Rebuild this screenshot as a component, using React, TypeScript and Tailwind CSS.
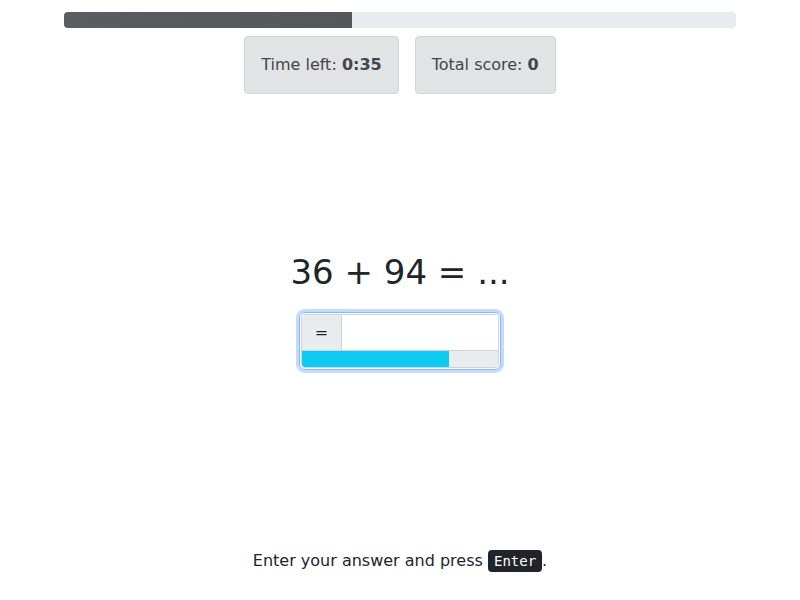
import React from 'react';

const font = { fontFamily: '"DejaVu Sans", sans-serif' };

function StatBox({ label, value }: { label: string; value: string }) {
    return (
        <div className="px-4 py-4 bg-[#e2e3e5] border border-[#d3d6d8] rounded text-[#41464b] text-base leading-6">
            {label} <strong className="font-bold">{value}</strong>
        </div>
    );
}

export default function App() {
    const timeProgress = 42.86;
    const answerProgress = 75;

    return (
        <div className="w-[800px] h-[600px] bg-white text-[#212529] flex flex-col items-center" style={font}>
            <div className="w-[672px] h-4 mt-3 bg-[#e9ecef] rounded overflow-hidden flex">
                <div className="h-full bg-gradient-to-r from-[#5a5d62] to-[#53565b]" style={{ width: `${timeProgress}%` }} />
            </div>

            <div className="flex gap-4 mt-2">
                <StatBox label="Time left:" value="0:35" />
                <StatBox label="Total score:" value="0" />
            </div>

            <h1 className="mt-[158px] text-[34px] leading-[1.2] font-normal">36 + 94 = ...</h1>

            <div className="mt-[19px] w-[202px] rounded-md border border-[#86b7fe] shadow-[0_0_0_3px_rgba(13,110,253,0.25)] overflow-hidden p-px">
                <div className="rounded overflow-hidden border border-[#ced4da]">
                    <div className="flex h-[36px] border-b border-[#ced4da]">
                        <div className="w-10 bg-[#e9ecef] border-r border-[#ced4da] flex items-center justify-center text-base pt-px">=</div>
                        <input className="flex-1 min-w-0 bg-white outline-none px-3 text-base" />
                    </div>
                    <div className="h-4 bg-[#e9ecef] flex">
                        <div className="h-full bg-[#0dcaf0]" style={{ width: `${answerProgress}%` }} />
                    </div>
                </div>
            </div>

            <p className="mt-auto mb-[27px] text-base leading-6">
                Enter your answer and press{' '}
                <kbd
                    className="bg-[#212529] text-white text-[14px] px-1.5 py-[3px] rounded"
                    style={{ fontFamily: '"DejaVu Sans Mono", monospace' }}
                >
                    Enter
                </kbd>
                .
            </p>
        </div>
    );
}
